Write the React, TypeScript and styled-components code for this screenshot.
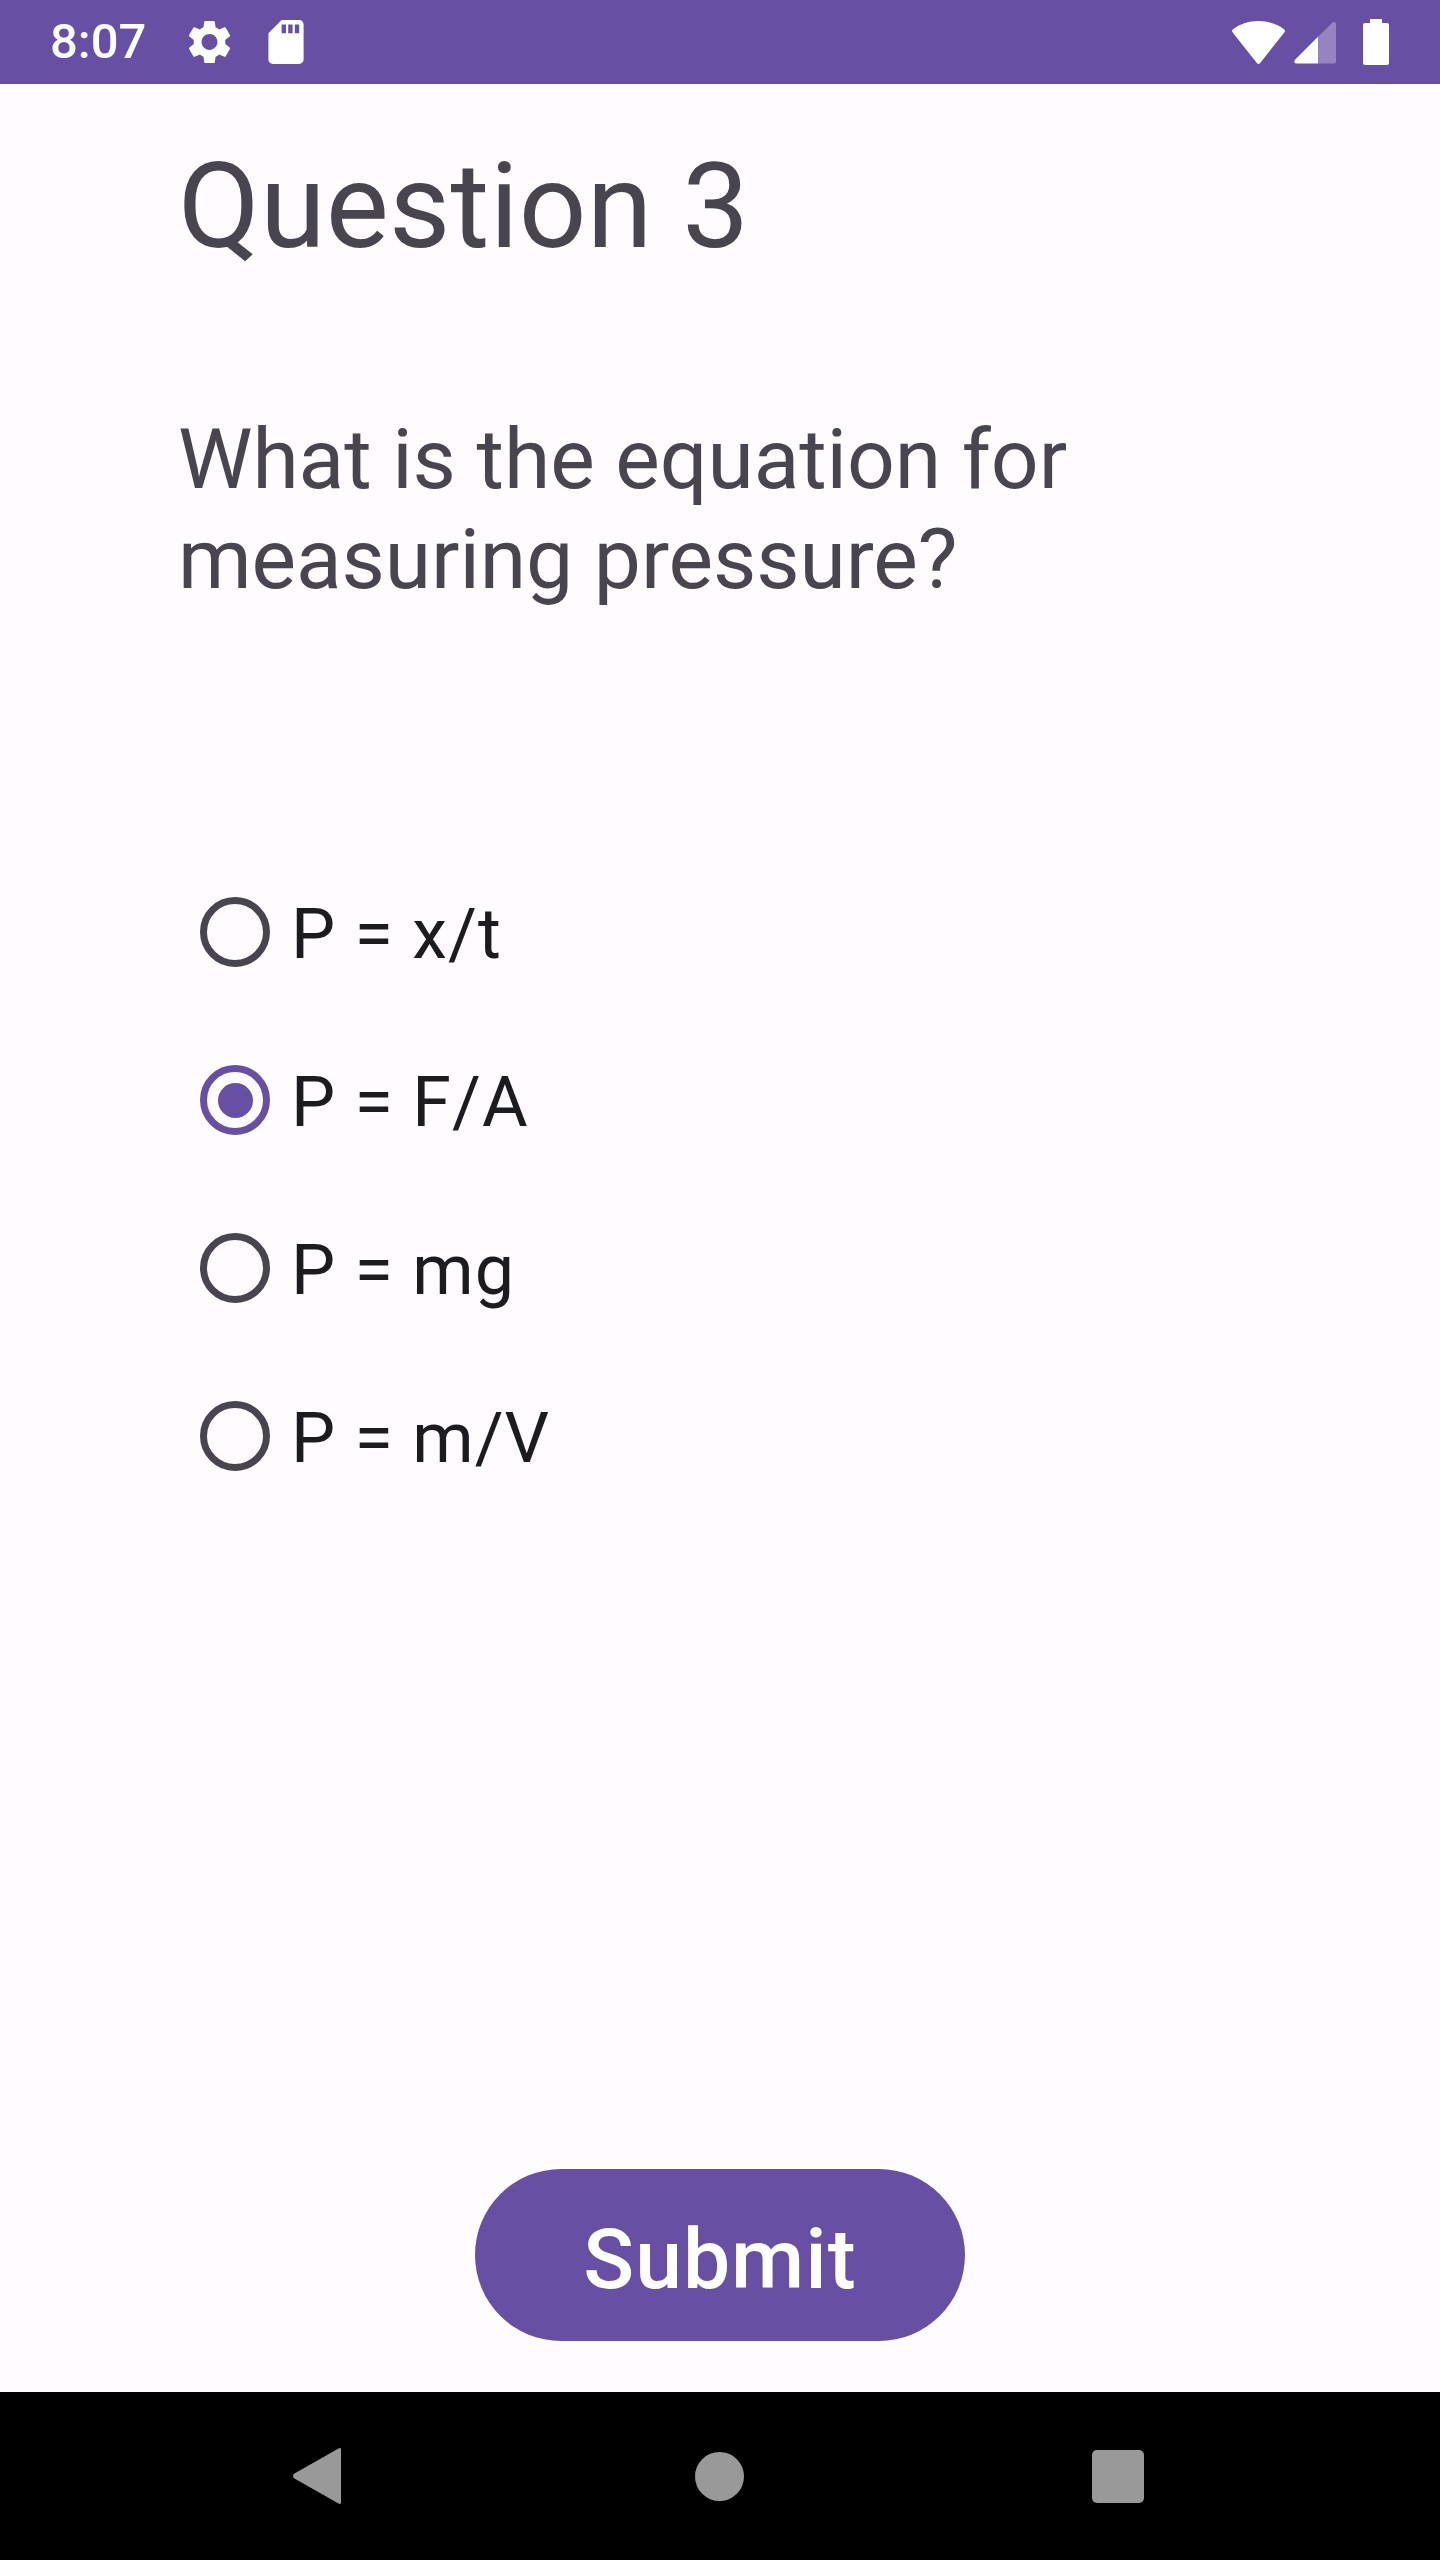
import { createGlobalStyle, styled } from "styled-components";

const GlobalStyle = createGlobalStyle`
  html, body {
    margin: 0;
    padding: 0;
    background: #fffbfe;
  }
`;

const options = [
  { label: "P = x/t", checked: false },
  { label: "P = F/A", checked: true },
  { label: "P = mg", checked: false },
  { label: "P = m/V", checked: false },
];

export default function App() {
  return (
    <Screen>
      <GlobalStyle />
      <StatusBar>
        <Clock>8:07</Clock>
        <GearIcon viewBox="2.4 2 19.2 20">
          <path d="M19.14 12.94c.04-.3.06-.61.06-.94 0-.32-.02-.64-.07-.94l2.03-1.58c.18-.14.23-.41.12-.61l-1.92-3.32c-.12-.22-.37-.29-.59-.22l-2.39.96c-.5-.38-1.03-.7-1.62-.94l-.36-2.54c-.04-.24-.24-.41-.48-.41h-3.84c-.24 0-.43.17-.47.41l-.36 2.54c-.59.24-1.13.57-1.62.94l-2.39-.96c-.22-.08-.47 0-.59.22L2.74 8.87c-.12.21-.08.47.12.61l2.03 1.58c-.05.3-.07.63-.07.94s.02.64.07.94l-2.03 1.58c-.18.14-.23.41-.12.61l1.92 3.32c.12.22.37.29.59.22l2.39-.96c.5.38 1.03.7 1.62.94l.36 2.54c.05.24.24.41.48.41h3.84c.24 0 .44-.17.47-.41l.36-2.54c.59-.24 1.13-.56 1.62-.94l2.39.96c.22.08.47 0 .59-.22l1.92-3.32c.12-.22.07-.47-.12-.61l-2.01-1.58zM12 15.6c-1.98 0-3.6-1.62-3.6-3.6s1.62-3.6 3.6-3.6 3.6 1.62 3.6 3.6-1.62 3.6-3.6 3.6z" />
        </GearIcon>
        <SdIcon viewBox="4 2 16 20">
          <path d="M18 2h-8L4.02 8 4 20c0 1.1.9 2 2 2h12c1.1 0 2-.9 2-2V4c0-1.1-.9-2-2-2zm-6 6h-2V4h2v4zm3 0h-2V4h2v4zm3 0h-2V4h2v4z" />
        </SdIcon>
        <StatusRight>
          <WifiIcon viewBox="0 0 53 43">
            <path d="M26.5 0C16.5 0 7.500 3.200 1 8.200c-1 .8-1.200 2-.5 3L24.800 42c.9 1.200 2.500 1.200 3.400 0L52.500 11.200c.7-1 .5-2.200-.5-3C45.500 3.200 36.500 0 26.500 0z" />
          </WifiIcon>
          <SignalIcon viewBox="0 0 42 42">
            <path d="M24 14.700 1 37.800C-.5 39.300.3 41.500 2 41.500h22z" />
            <path opacity="0.3" d="M24 14.700 38.500.6C39.800-.5 42 .2 42 2v37.500c0 1.200-.8 2-2 2H24z" />
          </SignalIcon>
          <BatteryIcon viewBox="0 0 26 46">
            <path d="M7 0h12v4h5c1.200 0 2 .8 2 2v38c0 1.200-.8 2-2 2H2c-1.200 0-2-.8-2-2V6c0-1.200.8-2 2-2h5z" />
          </BatteryIcon>
        </StatusRight>
      </StatusBar>

      <Content>
        <Title>Question 3</Title>
        <QuestionText>
          What is the equation for
          <br />
          measuring pressure?
        </QuestionText>
        <OptionList>
          {options.map((option) => (
            <OptionRow key={option.label}>
              <RadioRing $checked={option.checked}>{option.checked && <RadioDot />}</RadioRing>
              <OptionLabel>{option.label}</OptionLabel>
            </OptionRow>
          ))}
        </OptionList>
        <SubmitButton type="button">Submit</SubmitButton>
      </Content>

      <NavBar>
        <BackIcon viewBox="0 0 48 56">
          <path d="M46 .3 1 25.800c-1.300 1.300-1.300 3.100 0 4.400l45 25.500c1 .6 2-.2 2-1.200V1.500c0-1-1-1.800-2-1.200z" />
        </BackIcon>
        <HomeDot />
        <RecentSquare />
      </NavBar>
    </Screen>
  );
}

const Screen = styled.div`
  display: flex;
  flex-direction: column;
  width: 1440px;
  height: 2560px;
  overflow: hidden;
  background: #fffbfe;
  font-family: Roboto, "Liberation Sans", sans-serif;
`;

const StatusBar = styled.header`
  display: flex;
  align-items: center;
  box-sizing: border-box;
  height: 84px;
  padding: 0 51px 0 50px;
  background: #6750a4;
  color: #ffffff;
`;

const Clock = styled.span`
  width: 94px;
  font-size: 49px;
  font-weight: 500;
  line-height: 84px;
`;

const GearIcon = styled.svg`
  width: 43px;
  height: 44px;
  margin-left: 44px;
  fill: #ffffff;
`;

const SdIcon = styled.svg`
  width: 36px;
  height: 44px;
  margin-left: 37px;
  fill: #ffffff;
`;

const StatusRight = styled.div`
  display: flex;
  align-items: center;
  margin-left: auto;
`;

const WifiIcon = styled.svg`
  width: 53px;
  height: 43px;
  fill: #ffffff;
`;

const SignalIcon = styled.svg`
  width: 42px;
  height: 42px;
  margin-left: 9px;
  margin-top: 2px;
  fill: #ffffff;
`;

const BatteryIcon = styled.svg`
  width: 26px;
  height: 46px;
  margin-left: 27px;
  fill: #ffffff;
`;

const Content = styled.main`
  display: flex;
  flex: 1;
  flex-direction: column;
  min-height: 0;
  padding-left: 178px;
`;

const Title = styled.h1`
  margin: 59px 0 0;
  color: #49454f;
  font-size: 119px;
  font-weight: 400;
  letter-spacing: 0.15px;
  line-height: 128px;
`;

const QuestionText = styled.p`
  margin: 139px 0 0;
  color: #49454f;
  font-size: 84px;
  font-weight: 400;
  letter-spacing: -0.1px;
  line-height: 100px;
`;

const OptionList = styled.div`
  display: flex;
  flex-direction: column;
  margin-top: 238px;
`;

const OptionRow = styled.label`
  display: flex;
  align-items: center;
  height: 168px;
`;

const RadioRing = styled.span<{ $checked: boolean }>`
  display: flex;
  align-items: center;
  justify-content: center;
  box-sizing: border-box;
  width: 70px;
  height: 70px;
  margin-left: 22px;
  border: 7px solid ${({ $checked }) => ($checked ? "#6750a4" : "#49454f")};
  border-radius: 50%;
`;

const RadioDot = styled.span`
  width: 35px;
  height: 35px;
  border-radius: 50%;
  background: #6750a4;
`;

const OptionLabel = styled.span`
  margin-left: 21px;
  padding-top: 4px;
  color: #1c1b1f;
  font-size: 70px;
  letter-spacing: 1px;
  line-height: 84px;
`;

const SubmitButton = styled.button`
  align-self: flex-start;
  width: 490px;
  height: 172px;
  margin: auto 0 51px 297px;
  padding: 8px 0 0;
  border: none;
  border-radius: 86px;
  background: #6750a4;
  color: #ffffff;
  font-family: inherit;
  font-size: 84px;
  font-weight: 500;
  letter-spacing: 1px;
`;

const NavBar = styled.nav`
  display: flex;
  align-items: center;
  height: 168px;
  background: #000000;
`;

const BackIcon = styled.svg`
  width: 48px;
  height: 56px;
  margin-left: 293px;
  fill: #999999;
`;

const HomeDot = styled.span`
  width: 49px;
  height: 49px;
  margin-left: 354px;
  border-radius: 50%;
  background: #999999;
`;

const RecentSquare = styled.span`
  width: 52px;
  height: 53px;
  margin-left: 348px;
  border-radius: 5px;
  background: #999999;
`;
